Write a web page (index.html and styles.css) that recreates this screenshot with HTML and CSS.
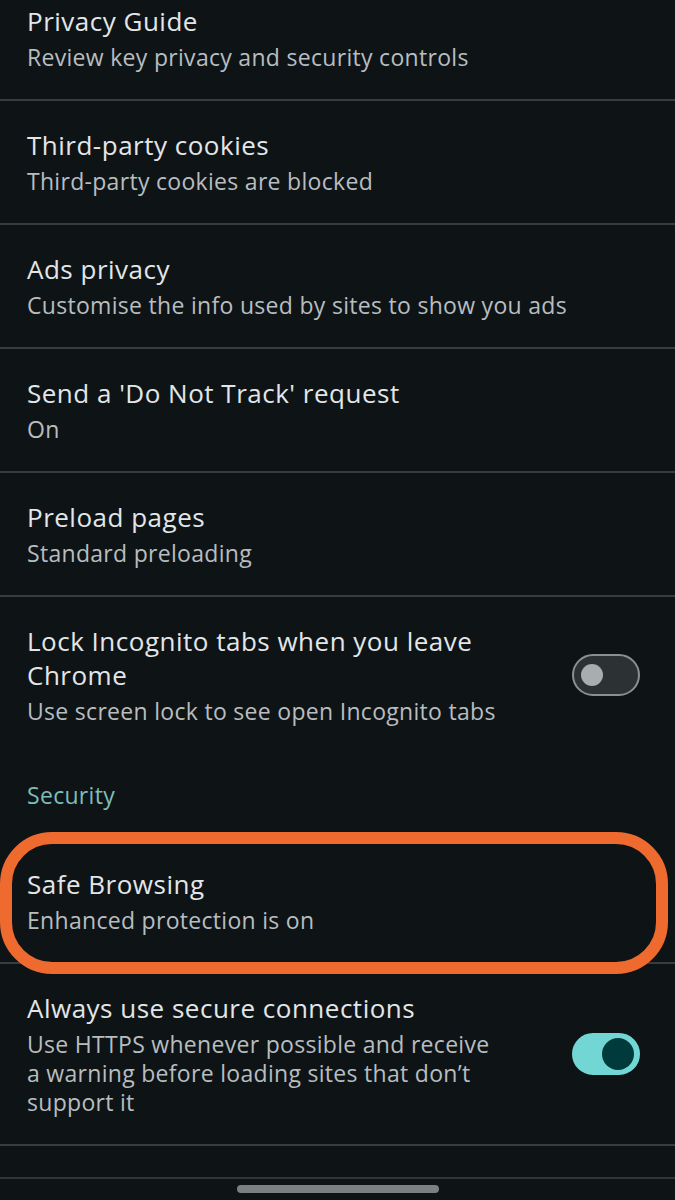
FILE: index.html
```html
<!DOCTYPE html>
<html lang="en">
<head>
    <meta charset="UTF-8">
    <meta name="viewport" content="width=device-width, initial-scale=1.0">
    <title>Privacy and security</title>
    <link rel="stylesheet" href="styles.css">
</head>
<body>

    <div class="settings-list">
        <div class="row first">
            <div class="text">
                <div class="title">Privacy Guide</div>
                <div class="summary">Review key privacy and security controls</div>
            </div>
        </div>

        <div class="row">
            <div class="text">
                <div class="title">Third-party cookies</div>
                <div class="summary">Third-party cookies are blocked</div>
            </div>
        </div>

        <div class="row">
            <div class="text">
                <div class="title">Ads privacy</div>
                <div class="summary">Customise the info used by sites to show you ads</div>
            </div>
        </div>

        <div class="row">
            <div class="text">
                <div class="title">Send a 'Do Not Track' request</div>
                <div class="summary">On</div>
            </div>
        </div>

        <div class="row">
            <div class="text">
                <div class="title">Preload pages</div>
                <div class="summary">Standard preloading</div>
            </div>
        </div>

        <div class="row no-divider">
            <div class="text narrow">
                <div class="title">Lock Incognito tabs when you leave Chrome</div>
                <div class="summary">Use screen lock to see open Incognito tabs</div>
            </div>
            <span class="switch"><span class="knob"></span></span>
        </div>

        <div class="section-header">Security</div>

        <div class="row highlighted">
            <div class="text">
                <div class="title">Safe Browsing</div>
                <div class="summary">Enhanced protection is on</div>
            </div>
            <div class="ring"></div>
        </div>

        <div class="row">
            <div class="text narrow">
                <div class="title">Always use secure connections</div>
                <div class="summary">Use HTTPS whenever possible and receive a warning before loading sites that don’t support it</div>
            </div>
            <span class="switch on"><span class="knob"></span></span>
        </div>

        <div class="row-peek"></div>
    </div>

    <div class="gesture-bar">
        <span class="pill"></span>
    </div>

</body>
</html>
```

FILE: styles.css
```css
body {
    margin: 0;
    background-color: #0e1416;
    font-family: "Open Sans", "Noto Sans", sans-serif;
    overflow: hidden;
}
.settings-list {
    display: flex;
    flex-direction: column;
}
.row {
    position: relative;
    display: flex;
    align-items: center;
    padding: 27px 35px 27px 27px;
    border-bottom: 2px solid #363c3f;
}
.row.first {
    margin-top: -23px;
}
.row.no-divider {
    border-bottom: none;
}
.text {
    flex: 1;
}
.text.narrow {
    flex: 0 0 475px;
    margin-right: auto;
}
.title {
    font-size: 26px;
    line-height: 34px;
    letter-spacing: 0.5px;
    color: #e3e6e8;
}
.summary {
    margin-top: 5px;
    font-size: 23px;
    line-height: 29px;
    letter-spacing: 0.3px;
    color: #b8bdc0;
}
.section-header {
    padding: 28px 27px 30px;
    font-size: 23px;
    line-height: 29px;
    letter-spacing: 0.3px;
    color: #7fbdba;
}

/* toggles */
.switch {
    box-sizing: border-box;
    display: flex;
    align-items: center;
    width: 68px;
    height: 42px;
    padding: 0 7px;
    border: 2px solid #899092;
    border-radius: 21px;
    background: #2c3234;
}
.switch .knob {
    width: 22px;
    height: 22px;
    border-radius: 50%;
    background: #a7aeaf;
}
.switch.on {
    justify-content: flex-end;
    padding: 0 4px;
    border-color: #72d7d4;
    background: #72d7d4;
}
.switch.on .knob {
    width: 32px;
    height: 32px;
    background: #003a3b;
}

/* orange annotation around Safe Browsing */
.ring {
    position: absolute;
    top: -8px;
    left: 0;
    right: 7px;
    bottom: -12px;
    border: 12px solid #ee6a2e;
    border-radius: 52px;
    box-sizing: border-box;
    pointer-events: none;
}

.row-peek {
    height: 31px;
}
.gesture-bar {
    display: flex;
    justify-content: center;
    height: 22px;
    border-top: 2px solid #2f3538;
}
.pill {
    width: 202px;
    height: 8px;
    margin-top: 6px;
    border-radius: 4px;
    background: #7b8083;
}
```
